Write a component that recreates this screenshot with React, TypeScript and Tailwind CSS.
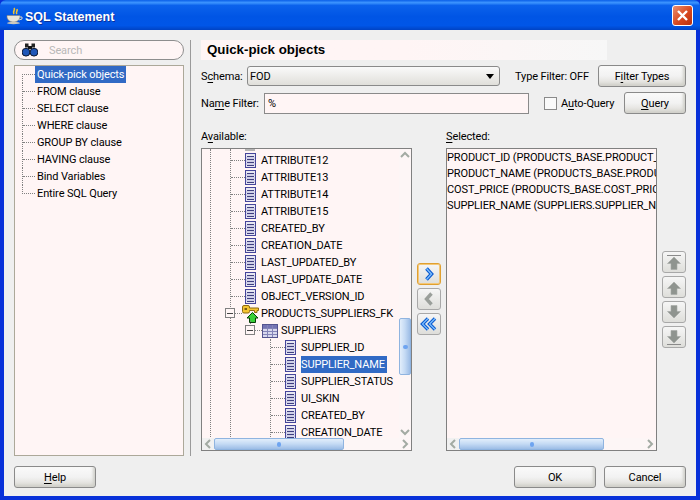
import React from "react";

const Mn = ({ children }: { children: React.ReactNode }) => (
  <span className="underline underline-offset-2">{children}</span>
);

const ColumnIcon = () => (
  <svg width="11" height="15" viewBox="0 0 11 15" className="shrink-0">
    <rect x="0.5" y="0.5" width="10" height="14" fill="#ffffff" stroke="#45459a" />
    <rect x="1" y="1" width="9" height="13" fill="#e6e6f2" />
    <path d="M2 3.5H9M2 6.5H9M2 9.5H9M2 12.5H9" stroke="#3f3f7f" strokeWidth="1" />
    <path d="M1 5H10M1 8H10M1 11H10" stroke="#b9b9dc" strokeWidth="1" />
  </svg>
);

const TableIcon = () => (
  <svg width="16" height="14" viewBox="0 0 16 14" className="shrink-0">
    <rect x="0.5" y="0.5" width="15" height="13" fill="#d8d8ee" stroke="#54548f" />
    <rect x="1" y="1" width="14" height="3" fill="#7474b4" />
    <path d="M5.5 1V13M10.5 1V13M1 4.5H15M1 7.5H15M1 10.5H15" stroke="#8484b8" />
  </svg>
);

const KeyIcon = () => (
  <svg width="17" height="18" viewBox="0 0 17 18" className="shrink-0">
    <path d="M0.5 2Q0.5 0.5 2 0.5H6Q7.5 0.5 7.5 2V3H16.5V5.5H15V7.5H12.5V5.5H7.5V6.5Q7.5 8 6 8H2Q0.5 8 0.5 6.5Z" fill="#f4c430" stroke="#8c6a10" strokeWidth="1" />
    <rect x="2.5" y="3" width="2.5" height="2" fill="#7a5c10" />
    <path d="M10.5 7.5L16 13H13.5V17.5H7.5V13H5Z" fill="#38d038" stroke="#063f06" strokeWidth="1" />
  </svg>
);

const Expander = () => (
  <span className="absolute flex h-[10px] w-[10px] items-center justify-center border border-[#808080] bg-[#fff5f5]">
    <span className="h-px w-[6px] bg-[#444444]" />
  </span>
);

const Connector = ({ w }: { w: string }) => (
  <span className={`${w} shrink-0 border-t border-dotted border-[#808080]`} />
);

const ColRow = ({ name, selected }: { name: string; selected?: boolean }) => (
  <div className="flex h-[17px] items-center">
    <Connector w="w-[14px]" />
    <ColumnIcon />
    <span
      className={`ml-[5px] flex h-[17px] items-center whitespace-nowrap pr-[2px] ${
        selected ? "bg-[#316ac5] text-white" : ""
      }`}
    >
      {name}
    </span>
  </div>
);

const Btn = ({ w, children }: { w: string; children: React.ReactNode }) => (
  <button className={`${w} flex h-[22px] shrink-0 items-center justify-center rounded-[3px] border border-[#8a8a8a] bg-gradient-to-b from-[#fafafa] via-[#f2f2f2] to-[#dcdad4] shadow-[inset_-2px_-2px_3px_#d0d0ca]`}>
    {children}
  </button>
);

const Chevron = ({ d }: { d: string }) => (
  <svg width="12" height="14" viewBox="0 0 12 14" fill="none">
    <path d={d} stroke="#0b5ad0" strokeWidth="3.6" />
    <path d={d} stroke="#7ec0ff" strokeWidth="1.3" />
  </svg>
);

const IconBtn = ({ children, accent }: { children: React.ReactNode; accent?: boolean }) => (
  <div
    className={`flex h-[22px] w-[24px] items-center justify-center rounded-[3px] border bg-gradient-to-b from-[#f6f6f6] to-[#dededa] ${
      accent ? "border-[#e0a030] shadow-[inset_0_0_0_1px_#f4c878]" : "border-[#a8a8a8]"
    }`}
  >
    {children}
  </div>
);

const GrayArrow = ({ dir, bar }: { dir: "up" | "down"; bar?: boolean }) => (
  <svg width="16" height="17" viewBox="0 0 16 17" className={dir === "down" ? "rotate-180" : ""}>
    {bar && <path d="M1 1.5H15" stroke="#8a8a8a" />}
    <path d="M8 3L14.5 9.5H11V15.5H5V9.5H1.5Z" fill="#8f948f" stroke="#a4a8a4" strokeWidth="0.6" />
  </svg>
);

const ArrowGlyph = ({ dir }: { dir: "up" | "down" | "left" | "right" }) => {
  const d = {
    up: "M1 7L5 3L9 7",
    down: "M1 3L5 7L9 3",
    left: "M7 1L3 5L7 9",
    right: "M3 1L7 5L3 9",
  }[dir];
  return (
    <svg width="10" height="10" viewBox="0 0 10 10" fill="none">
      <path d={d} stroke="#a3aba3" strokeWidth="2" />
    </svg>
  );
};

const HScroll = ({ thumb }: { thumb: string }) => (
  <div className="flex h-[12px] shrink-0 items-stretch bg-[#fdf6f6]">
    <div className="flex w-[12px] shrink-0 items-center justify-center bg-[#f1f1f1]">
      <ArrowGlyph dir="left" />
    </div>
    <div className={`${thumb} flex shrink-0 items-center justify-center rounded-[2px] border border-[#8fb4e0] bg-gradient-to-b from-[#e2eefb] via-[#c4daf4] to-[#9dbde6]`}>
      <span className="h-[5px] w-[4px] rounded-full bg-[#6ea4f0]" />
    </div>
    <div className="flex-1" />
    <div className="flex w-[12px] shrink-0 items-center justify-center">
      <ArrowGlyph dir="right" />
    </div>
  </div>
);

const leftItems = [
  "Quick-pick objects",
  "FROM clause",
  "SELECT clause",
  "WHERE clause",
  "GROUP BY clause",
  "HAVING clause",
  "Bind Variables",
  "Entire SQL Query",
];

const selectedItems = [
  "PRODUCT_ID (PRODUCTS_BASE.PRODUCT_ID)",
  "PRODUCT_NAME (PRODUCTS_BASE.PRODUCT_NAME)",
  "COST_PRICE (PRODUCTS_BASE.COST_PRICE)",
  "SUPPLIER_NAME (SUPPLIERS.SUPPLIER_NAME)",
];

export default function App() {
  return (
    <div className="flex h-[500px] w-[700px] flex-col overflow-hidden bg-[#0831d9] font-['Roboto',sans-serif] text-[11px] leading-none tracking-[-0.12px] text-black">
      {/* Title bar */}
      <div className="flex h-[30px] shrink-0 items-center rounded-t-[6px] bg-[linear-gradient(180deg,#0a5fe8_0%,#3d95ff_9%,#0b62ec_18%,#0055e5_55%,#0056e8_85%,#0043c4_100%)] pl-[6px] pr-[7px]">
        <svg width="17" height="18" viewBox="0 0 17 18" className="mt-[2px] shrink-0">
          <path d="M8 1C10 3 6 4 8 7M11 2C12 4 9 5 11 7" stroke="#f4c430" strokeWidth="1.6" fill="none" />
          <path d="M1 8.5H14V9.5C14 13 11 15 7.5 15S1 13 1 9.5Z" fill="#e8e4da" stroke="#8a8274" strokeWidth="0.6" />
          <path d="M14 10H16V12L13 13" stroke="#d8d4ca" fill="none" />
          <ellipse cx="7.5" cy="16" rx="6.5" ry="1.2" fill="#cfcabd" />
        </svg>
        <span className="ml-[2px] mt-[4px] font-['Liberation_Sans',sans-serif] text-[12.5px] font-bold tracking-normal text-white [text-shadow:1px_1px_0_#0a2f9c]">
          SQL Statement
        </span>
        <div className="ml-auto mt-[1px] flex h-[21px] w-[21px] items-center justify-center rounded-[3px] border border-white bg-[linear-gradient(135deg,#ea8f70,#d8481f_55%,#b8300f)]">
          <svg width="13" height="13" viewBox="0 0 13 13">
            <path d="M2 2L11 11M11 2L2 11" stroke="#ffffff" strokeWidth="2.4" />
          </svg>
        </div>
      </div>

      {/* Dialog body */}
      <div className="mx-[4px] mb-[4px] flex flex-1 flex-col bg-[#efefef] px-[10px] pb-[8px] pt-[10px]">
        <div className="flex h-[416px] shrink-0">
          {/* Navigator */}
          <div className="flex w-[170px] shrink-0 flex-col gap-[5px]">
            <div className="flex h-[20px] items-center rounded-full border border-[#8e8e8e] bg-[#fff5f5] pl-[7px]">
              <svg width="16" height="14" viewBox="0 0 16 14" className="shrink-0">
                <rect x="3" y="0.5" width="3.5" height="4" fill="#222222" />
                <rect x="9.5" y="0.5" width="3.5" height="4" fill="#222222" />
                <rect x="6" y="3" width="4" height="3" fill="#111111" />
                <circle cx="4" cy="9.2" r="3.9" fill="#1f56b8" stroke="#101a30" />
                <circle cx="12" cy="9.2" r="3.9" fill="#1f56b8" stroke="#101a30" />
              </svg>
              <span className="ml-[11px] text-[#b8b8b8]">Search</span>
            </div>
            <div className="flex-1 border border-[#aca899] bg-[#fff5f5] pl-[7px]">
              {leftItems.map((t, i) => (
                <div key={t} className="flex h-[17px] items-start">
                  {i === 0 ? (
                    <div className="mt-[8px] h-[9px] w-[13px] shrink-0 border-l border-t border-dotted border-[#808080]" />
                  ) : i === leftItems.length - 1 ? (
                    <div className="h-[9px] w-[13px] shrink-0 border-b border-l border-dotted border-[#808080]" />
                  ) : (
                    <div className="h-[17px] w-[13px] shrink-0 border-l border-dotted border-[#808080]">
                      <div className="h-[9px] border-b border-dotted border-[#808080]" />
                    </div>
                  )}
                  <span
                    className={`flex h-[17px] items-center whitespace-nowrap pl-[2px] pr-[2px] ${
                      i === 0 ? "w-[91px] bg-[#316ac5] text-white" : ""
                    }`}
                  >
                    {t}
                  </span>
                </div>
              ))}
            </div>
          </div>

          <div className="ml-[6px] w-px shrink-0 bg-[#9a9a9a]" />

          {/* Right pane */}
          <div className="ml-[10px] flex min-w-0 flex-1 flex-col">
            <div className="flex h-[20px] w-[406px] shrink-0 items-center bg-gradient-to-r from-[#fff5f5] via-[#fff5f5] to-[#f7f7f7] pl-[6px] font-['Liberation_Sans',sans-serif] text-[13.3px] font-bold tracking-normal">
              Quick-pick objects
            </div>

            <div className="mt-[5px] flex h-[22px] shrink-0 items-center">
              <label className="w-[46px] shrink-0">
                S<Mn>c</Mn>hema:
              </label>
              <div className="flex h-[20px] w-[253px] shrink-0 items-center justify-between rounded-[3px] border border-[#8a8a8a] bg-gradient-to-b from-[#fafafa] to-[#e0dfda] pl-[2px] pr-[5px]">
                <span>FOD</span>
                <span className="h-0 w-0 border-x-[4px] border-t-[5px] border-x-transparent border-t-black" />
              </div>
              <span className="ml-[15px] w-[83px] shrink-0">Type Filter: OFF</span>
              <Btn w="w-[88px]">
                <span>
                  F<Mn>i</Mn>lter Types
                </span>
              </Btn>
            </div>

            <div className="mt-[5px] flex h-[22px] shrink-0 items-center">
              <label className="w-[63px] shrink-0">
                Na<Mn>m</Mn>e Filter:
              </label>
              <div className="flex h-[21px] w-[265px] shrink-0 items-center border border-[#8a8a8a] bg-[#fff5f5] pl-[3px]">%</div>
              <span className="ml-[15px] h-[13px] w-[13px] shrink-0 border border-[#8a8a8a] bg-[#fafafa]" />
              <span className="ml-[4px] shrink-0">
                A<Mn>u</Mn>to-Query
              </span>
              <div className="flex-1" />
              <Btn w="w-[62px]">
                <span>
                  <Mn>Q</Mn>uery
                </span>
              </Btn>
            </div>

            {/* Shuttle */}
            <div className="mt-[16px] grid flex-1 grid-cols-[211px_34px_211px_29px] grid-rows-[18px_303px] content-start">
              <div className="pt-px">
                A<Mn>v</Mn>ailable:
              </div>
              <div />
              <div className="pt-px">
                <Mn>S</Mn>elected:
              </div>
              <div />

              {/* Available tree */}
              <div className="flex min-h-0 flex-col border border-[#808080] bg-[#fff5f5]">
                <div className="flex min-h-0 flex-1">
                  <div className="min-w-0 flex-1 overflow-hidden">
                    <div className="ml-[8px] border-l border-dotted border-[#808080]">
                      <div className="ml-[19px] border-l border-dotted border-[#808080]">
                        <div className="ml-[14px] h-[2px] w-[10px] bg-[#b4b4b4]" />
                        <div className="h-[1px]" />
                        {[
                          "ATTRIBUTE12",
                          "ATTRIBUTE13",
                          "ATTRIBUTE14",
                          "ATTRIBUTE15",
                          "CREATED_BY",
                          "CREATION_DATE",
                          "LAST_UPDATED_BY",
                          "LAST_UPDATE_DATE",
                          "OBJECT_VERSION_ID",
                        ].map((n) => (
                          <ColRow key={n} name={n} />
                        ))}
                        <div className="relative flex h-[17px] items-center">
                          <span className="absolute left-[-6px] top-[3px]">
                            <Expander />
                          </span>
                          <Connector w="w-[11px]" />
                          <KeyIcon />
                          <span className="ml-[2px] whitespace-nowrap">PRODUCTS_SUPPLIERS_FK</span>
                        </div>
                        <div className="relative flex h-[17px] items-center pl-[19px]">
                          <span className="absolute left-[19px] top-[-1px] h-[5px] border-l border-dotted border-[#808080]" />
                          <span className="absolute left-[14px] top-[3px]">
                            <Expander />
                          </span>
                          <span className="ml-[5px] w-[7px] shrink-0 border-t border-dotted border-[#808080]" />
                          <TableIcon />
                          <span className="ml-[3px] whitespace-nowrap">SUPPLIERS</span>
                        </div>
                        <div className="ml-[39px] border-l border-dotted border-[#808080]">
                          <ColRow name="SUPPLIER_ID" />
                          <ColRow name="SUPPLIER_NAME" selected />
                          <ColRow name="SUPPLIER_STATUS" />
                          <ColRow name="UI_SKIN" />
                          <ColRow name="CREATED_BY" />
                          <ColRow name="CREATION_DATE" />
                        </div>
                      </div>
                    </div>
                  </div>
                  {/* Vertical scrollbar */}
                  <div className="flex w-[12px] shrink-0 flex-col items-stretch bg-[#fdf6f6]">
                    <div className="flex h-[12px] shrink-0 items-center justify-center">
                      <ArrowGlyph dir="up" />
                    </div>
                    <div className="h-[157px] shrink-0" />
                    <div className="flex h-[57px] shrink-0 items-center justify-center rounded-[2px] border border-[#8fb4e0] bg-gradient-to-r from-[#e2eefb] via-[#c4daf4] to-[#9dbde6]">
                      <span className="h-[4px] w-[5px] rounded-full bg-[#6ea4f0]" />
                    </div>
                    <div className="flex-1" />
                    <div className="flex h-[12px] shrink-0 items-center justify-center">
                      <ArrowGlyph dir="down" />
                    </div>
                  </div>
                </div>
                <HScroll thumb="w-[130px]" />
              </div>

              {/* Shuttle buttons */}
              <div className="flex flex-col items-center gap-[3px] pt-[115px]">
                <IconBtn accent>
                  <Chevron d="M3.5 1.5L8.5 7L3.5 12.5" />
                </IconBtn>
                <IconBtn>
                  <svg width="12" height="14" viewBox="0 0 12 14" fill="none">
                    <path d="M8.5 1.5L3.5 7L8.5 12.5" stroke="#9a9f9a" strokeWidth="3.4" />
                  </svg>
                </IconBtn>
                <IconBtn>
                  <svg width="18" height="14" viewBox="0 0 18 14" fill="none">
                    <path d="M8 1.5L2.5 7L8 12.5M15 1.5L9.5 7L15 12.5" stroke="#0b5ad0" strokeWidth="3.4" />
                    <path d="M8 1.5L2.5 7L8 12.5M15 1.5L9.5 7L15 12.5" stroke="#7ec0ff" strokeWidth="1.2" />
                  </svg>
                </IconBtn>
              </div>

              {/* Selected list */}
              <div className="flex min-h-0 min-w-0 flex-col border border-[#808080] bg-[#fff5f5]">
                <div className="min-h-0 flex-1 overflow-hidden">
                  {selectedItems.map((s) => (
                    <div key={s} className="flex h-[16px] items-center whitespace-nowrap">
                      {s}
                    </div>
                  ))}
                </div>
                <HScroll thumb="w-[145px]" />
              </div>

              {/* Reorder buttons */}
              <div className="flex flex-col gap-[3px] pl-[5px] pt-[103px]">
                <IconBtn>
                  <GrayArrow dir="up" bar />
                </IconBtn>
                <IconBtn>
                  <GrayArrow dir="up" />
                </IconBtn>
                <IconBtn>
                  <GrayArrow dir="down" />
                </IconBtn>
                <IconBtn>
                  <GrayArrow dir="down" bar />
                </IconBtn>
              </div>
            </div>
          </div>
        </div>

        {/* Footer */}
        <div className="mt-[10px] flex h-[22px] shrink-0 items-center">
          <Btn w="w-[82px]">
            <span>
              <Mn>H</Mn>elp
            </span>
          </Btn>
          <div className="flex-1" />
          <Btn w="w-[82px]">OK</Btn>
          <div className="w-[8px]" />
          <Btn w="w-[82px]">Cancel</Btn>
        </div>
      </div>
    </div>
  );
}
